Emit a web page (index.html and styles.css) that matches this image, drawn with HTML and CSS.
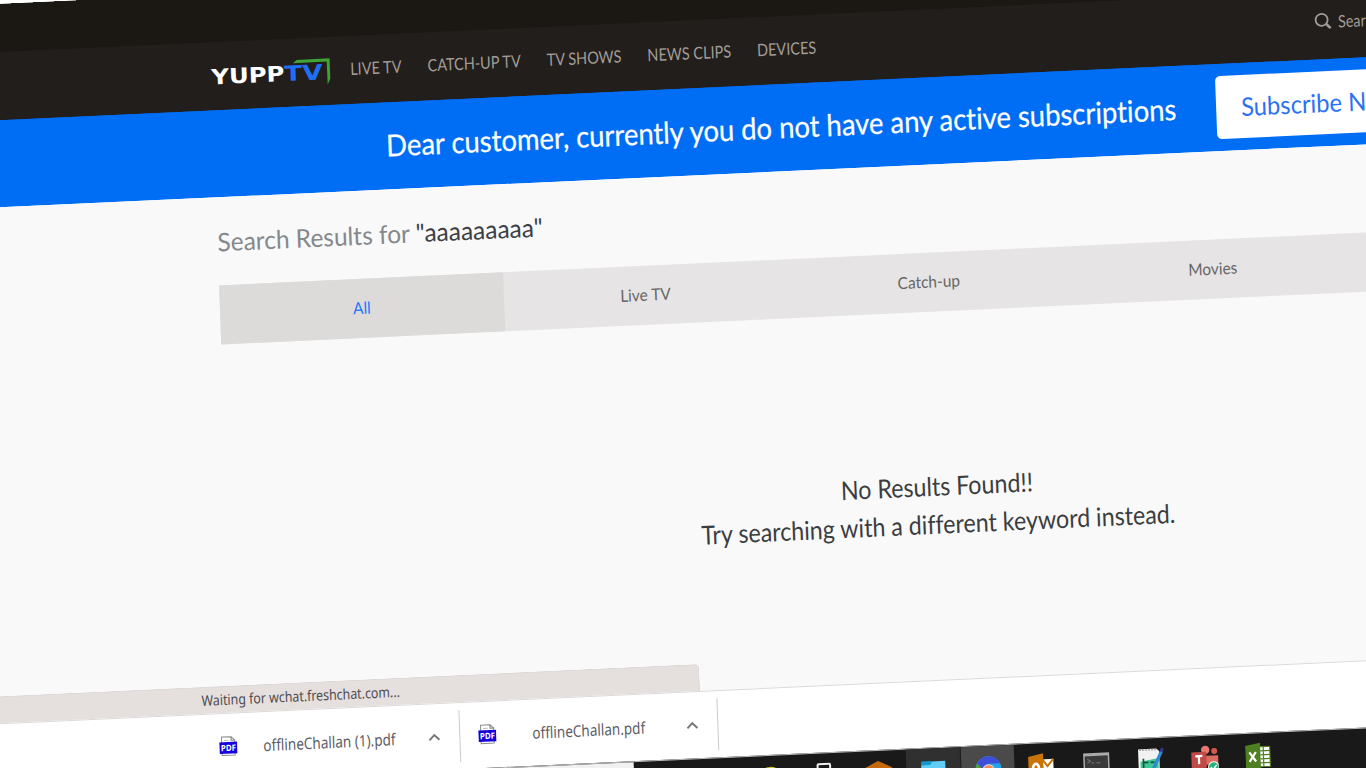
FILE: index.html
```html
<!DOCTYPE html>
<html lang="en">
<head>
<meta charset="utf-8">
<title>YuppTV</title>
<link rel="stylesheet" href="styles.css">
</head>
<body>
<div class="screen">
<div class="stage">
  <div class="frame-top"></div>
  <header class="nav">
    <div class="logo">
      <span class="logo-yupp">YUPP</span><span class="logo-tv">TV</span>
      <svg class="logo-mark" width="40" height="30" viewBox="0 0 40 30"><path d="M2 4.6 L6 1.6 L38.8 1.2 V21.5 L36 27.5 L35.8 4.4 Z" fill="#3fa535"/></svg>
    </div>
    <nav class="links"><a>LIVE TV</a><a>CATCH-UP TV</a><a>TV SHOWS</a><a>NEWS CLIPS</a><a>DEVICES</a></nav>
    <div class="search">
      <svg width="18" height="18" viewBox="0 0 18 18" fill="none" stroke="#a19b98"><circle cx="7.6" cy="7.6" r="6" stroke-width="1.8"/><path d="M12 12 L16.3 16.3" stroke-width="2.6"/></svg>
      <span>Sear</span>
    </div>
  </header>
  <section class="banner">
    <span class="msg">Dear customer, currently you do not have any active subscriptions</span>
    <a class="subscribe"><span>Subscribe Now</span></a>
  </section>
  <main class="content">
    <h1>Search Results for <b>"aaaaaaaaa"</b></h1>
    <div class="tabs"><a class="on"><span>All</span></a><a><span>Live TV</span></a><a><span>Catch-up</span></a><a><span>Movies</span></a><a></a></div>
    <div class="empty"><p>No Results Found!!</p><p>Try searching with a different keyword instead.</p></div>
    <div class="status"><span>Waiting for wchat.freshchat.com...</span></div>
  </main>
  <section class="shelf">
    <div class="file first">
      <svg class="pdf" width="18" height="21" viewBox="0 0 18 21"><path d="M2.5 1 H12 L15.5 4.5 V19.5 H2.5 Z" fill="#fff" stroke="#8a8a8a"/><path d="M12 1 V4.5 H15.5" fill="none" stroke="#777"/><path d="M5 4.5 H9.5" stroke="#bbb"/><rect y="6.2" width="18" height="11.6" fill="#1500dc"/><text x="9" y="15.1" text-anchor="middle" textLength="15" lengthAdjust="spacingAndGlyphs">PDF</text></svg>
      <span class="name">offlineChallan (1).pdf</span>
      <svg class="chev" width="12" height="8" viewBox="0 0 12 8"><path d="M1 6.8 L6 1.8 L11 6.8" fill="none" stroke="#777" stroke-width="2"/></svg>
    </div>
    <div class="file second">
      <svg class="pdf" width="18" height="21" viewBox="0 0 18 21"><path d="M2.5 1 H12 L15.5 4.5 V19.5 H2.5 Z" fill="#fff" stroke="#8a8a8a"/><path d="M12 1 V4.5 H15.5" fill="none" stroke="#777"/><path d="M5 4.5 H9.5" stroke="#bbb"/><rect y="6.2" width="18" height="11.6" fill="#1500dc"/><text x="9" y="15.1" text-anchor="middle" textLength="15" lengthAdjust="spacingAndGlyphs">PDF</text></svg>
      <span class="name">offlineChallan.pdf</span>
      <svg class="chev" width="12" height="8" viewBox="0 0 12 8"><path d="M1 6.8 L6 1.8 L11 6.8" fill="none" stroke="#777" stroke-width="2"/></svg>
    </div>
  </section>
  <footer class="taskbar">
    <div class="search-box"></div>
    <div class="apps">
      <i><svg viewBox="0 0 28 28"><defs><linearGradient id="g"><stop offset="0" stop-color="#8fc63a"/><stop offset="1" stop-color="#f5c41c"/></linearGradient></defs><circle cx="14" cy="15" r="13" fill="url(#g)"/></svg></i>
      <i><svg viewBox="0 0 28 28"><rect x="7.5" y="1.6" width="12.5" height="20" rx="1" fill="none" stroke="#eee" stroke-width="2"/></svg></i>
      <i><svg viewBox="0 0 28 28"><path d="M14 1 L28 8 V22 L14 28 L0 22 V8 Z" fill="#c46a0c"/><path d="M0 8 L14 14 L28 8 V22 L14 28 L0 22 Z" fill="#a8570a"/></svg></i>
      <i class="open"><svg viewBox="0 0 28 28"><path d="M2 3.5 H12 L14 5 H26 V26 H2 Z" fill="#129ad0"/><path d="M13 4 H26 V26 H2 V7.5 H11 Z" fill="#62cdf6"/></svg></i>
      <i class="active"><svg viewBox="0 0 28 28"><circle cx="14" cy="14.5" r="13" fill="#27a4e8"/><path d="M14 14 L3 8 A13 13 0 0 0 5 23 Z" fill="#5a9e2d"/><path d="M3 8 A13 13 0 0 1 26 9 L14 9 L9 15 Z" fill="#3f4fdc"/><circle cx="14" cy="15.5" r="5.6" fill="#f68a5a" stroke="#ddd" stroke-width="1"/></svg></i>
      <i><svg viewBox="0 0 28 28"><rect x="14" y="7" width="12" height="17" fill="#fff"/><path d="M15 7 L20 14 L26 7" fill="none" stroke="#c87408" stroke-width="2"/><path d="M1 4 L16 1 V28 L1 25 Z" fill="#c87408"/><ellipse cx="8.5" cy="16" rx="3" ry="4.8" fill="none" stroke="#fff" stroke-width="2.6"/></svg></i>
      <i><svg viewBox="0 0 28 28"><rect x="1" y="3" width="26" height="23" fill="#aaa"/><rect x="2.5" y="6" width="23" height="18" fill="#3a3a3a"/><path d="M5 9 L8 11 L5 13 M9 13 H12 M14 13 H18" fill="none" stroke="#777"/></svg></i>
      <i><svg viewBox="0 0 28 28"><path d="M2 1.5 H20 L23 4 V28 H2 Z" fill="#f2f2f2"/><path d="M3 2.5 H20" stroke="#aaa" stroke-width="1.4" stroke-dasharray="2 1"/><path d="M4 14 L22 11 V28 H4 Z" fill="#3fc795"/><path d="M7 11 V21 M7 15 H12 M14 15 H18" stroke="#154" stroke-width="1.7"/><path d="M25.5 4 L17 21" stroke="#2e8ad0" stroke-width="3.2"/><path d="M26.5 1.5 L25 5" stroke="#343a92" stroke-width="3"/></svg></i>
      <i><svg viewBox="0 0 28 28"><circle cx="15" cy="5" r="4.2" fill="#ea7870"/><circle cx="24" cy="6.5" r="3" fill="#d4584f"/><path d="M10 11 H28 V20 H10 Z" fill="#dc6c62"/><rect x="1" y="7" width="15" height="16" fill="#c04a46"/><path d="M5 11 H12 M8.5 11 V19" stroke="#fff" stroke-width="2.2"/><circle cx="23" cy="22.5" r="5.2" fill="#22b37c" stroke="#fff"/><path d="M20 22.5 L22.3 25 L26 20.5" fill="none" stroke="#fff" stroke-width="1.5"/></svg></i>
      <i><svg viewBox="0 0 28 28"><rect x="14" y="4.5" width="10.5" height="20" fill="#fff" stroke="#4e7f20"/><path d="M18 4 V24 M15 8.5 H25 M15 12.5 H25 M15 16.5 H25 M15 20.5 H25" stroke="#4e7f20" stroke-width="1.2"/><path d="M0 3 L15 .5 V28 L0 25 Z" fill="#4e7f20"/><path d="M4 9.5 L10.5 19 M10.5 9.5 L4 19" stroke="#fff" stroke-width="2.2"/></svg></i>
    </div>
  </footer>
</div>
</div>
</body>
</html>
```
FILE: styles.css
```css
body {
  margin: 0;
  background: #fff;
  font-family: Lato, sans-serif;
  font-variant-ligatures: none;
}

.screen { width: 1366px; height: 768px; overflow: hidden; }

/* The whole screen is tilted as one sheet. */
.stage {
  width: 1420px;
  height: 830px;
  transform-origin: 0 0;
  transform: matrix(1, -.0461, .0375, 1, -40, 1.844);
  display: flex;
  flex-direction: column;
  background: linear-gradient(transparent 4px, #221e1b 4px, #221e1b 119px, #006df5 119px, #006df5 206px, #fff 206px);
}

.stage > * { box-sizing: border-box; flex: none; }
span, a, p, h1 { white-space: nowrap; }
b { font-weight: 400; color: #3c4046; }

.frame-top { margin-top: 4px; height: 48px; background: #1b1713; }

.nav {
  height: 68px;
  background: #221e1b;
  display: flex;
  align-items: center;
  padding-left: 248px;
  color: #a39d98;
}

.logo { position: relative; display: flex; width: 138.5px; padding-top: 2px; font: 700 21px "DejaVu Sans", sans-serif; }
.logo-yupp { width: 73px; color: #fff; transform: scaleX(1.16); transform-origin: 0 0; }
.logo-tv { color: #1f6ff5; transform: scaleX(1.25); transform-origin: 0 0; }
.logo-mark { position: absolute; left: 80px; top: -1px; }

.links {
  display: flex;
  gap: 30.5px;
  width: 971.5px;
  flex: none;
  font-size: 17px;
  padding-bottom: 3px;
  transform: scaleX(.852);
  transform-origin: 0 0;
}

.search { display: flex; align-items: center; margin-left: -7.5px; padding-bottom: 8px; }
.search svg { flex: none; }
.search span { margin-left: 6.5px; font-size: 17px; transform: scaleX(.84); transform-origin: 0 0; }

.banner {
  height: 87px;
  background: #006df5;
  color: #fff;
  display: flex;
  align-items: center;
  padding-left: 419.5px;
}

.msg { width: 830.5px; flex: none; font-size: 30px; transform: scaleX(.914); transform-origin: 0 0; padding-bottom: 3px; -webkit-text-stroke: .25px; }

.subscribe {
  width: 220px;
  height: 63px;
  flex: none;
  box-sizing: border-box;
  padding: 0 0 1px 24.5px;
  display: flex;
  align-items: center;
  border-radius: 5px;
  background: #fff;
  color: #2a72f0;
  font-size: 25.5px;
}
.subscribe span { transform: scaleX(.93); transform-origin: 0 0; }

.content { height: 515px; display: flex; flex-direction: column; background: #f9f9f9; }

h1 {
  margin: 0 0 0 248.3px;
  font-weight: 400;
  font-size: 25.5px;
  line-height: 88px;
  height: 87.6px;
  color: #85888c;
  transform: scaleX(.96);
  transform-origin: 0 0;
}

.tabs { margin-left: 248.4px; height: 59.5px; display: flex; background: #e6e4e5; font-size: 16.5px; color: #666; }
.tabs a { flex: 0 0 283.6px; display: flex; align-items: center; justify-content: center; }
.tabs span { transform: translateX(-.7px) scaleX(.935); }
.tabs .on { background: #dcdbda; color: #2277fa; }

.empty {
  padding-top: 154.6px;
  width: 600px;
  margin-left: 656.7px;
  text-align: center;
  font-size: 26px;
  line-height: 38.2px;
  color: #3b3d40;
  transform: scaleX(.893);
}
.empty p { margin: 0; }

.status {
  margin-top: auto;
  width: 712.5px;
  height: 27px;
  box-sizing: border-box;
  border: 1px solid #d9d6d5;
  border-width: 1px 1px 0 0;
  border-radius: 0 5px 0 0;
  background: #e5dfdd;
  padding-left: 215px;
  line-height: 25px;
  color: #4c4c50;
  font-family: "Noto Sans", sans-serif;
  font-size: 14.5px;
}
.status span { display: inline-block; transform: scaleX(.852); transform-origin: 0 0; }

.shelf {
  height: 67px;
  border-top: 1px solid #dcdad9;
  background: #fff;
  display: flex;
  align-items: center;
  font-family: "Noto Sans", sans-serif;
  font-size: 16px;
  color: #5c5d66;
}
.file { height: 52px; box-sizing: border-box; border-right: 1.5px solid #ccc; display: flex; align-items: center; }
.first { width: 472px; padding-left: 231.2px; }
.second { width: 258.3px; padding-left: 17.5px; }
.name { flex: none; transform: scaleX(.845); transform-origin: 0 0; }
.first .name { margin-left: 26px; width: 165px; }
.second .name { margin-left: 36.4px; width: 154px; }
.pdf { flex: none; margin-bottom: 2px; }
.pdf text { font: 700 8.5px "Noto Sans", sans-serif; fill: #fff; }
.chev { flex: none; }

.taskbar { height: 41px; background: #191919; border-top: 1px solid #bbb; display: flex; }
.search-box { width: 644px; background: #f1f1f1; flex: none; }
.apps { margin-left: 108.7px; display: grid; grid-template-columns: repeat(10, 54.3px); }
.apps i { display: flex; justify-content: center; padding-top: 9px; }
.apps svg { width: 28px; height: 28px; }
.apps .open { background: #303030; }
.apps .active { background: #4a4a4a; border-left: 1px solid #191919; }
```
